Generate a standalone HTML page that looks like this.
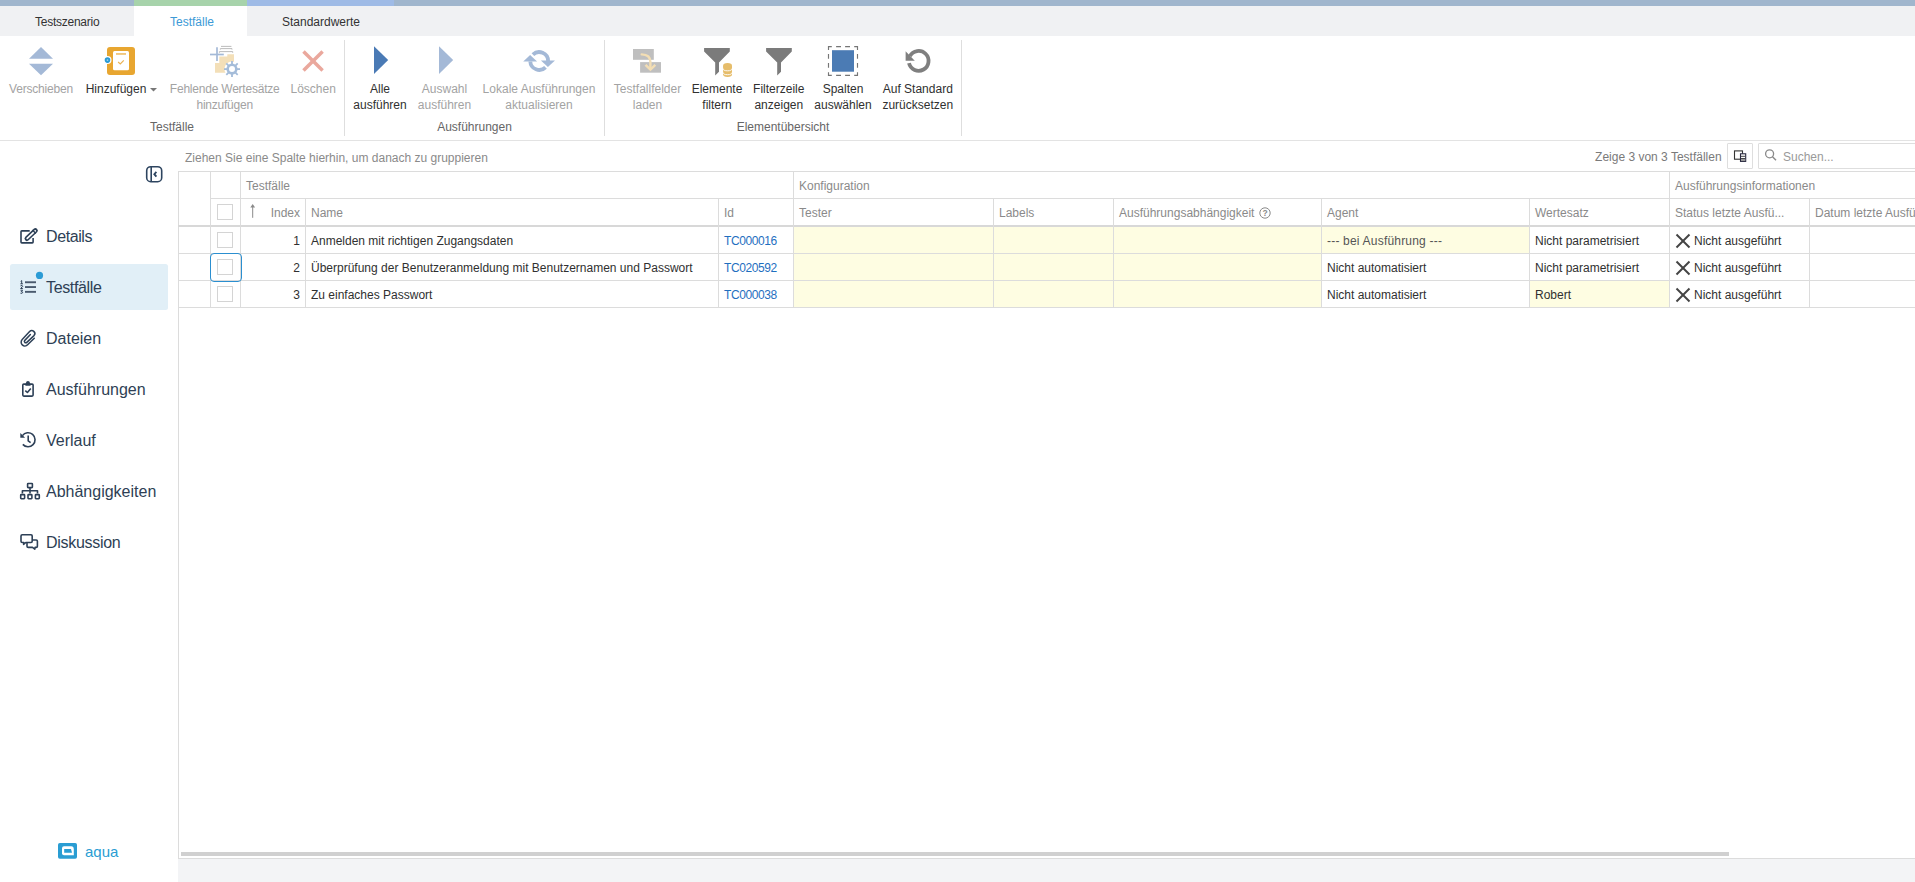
<!DOCTYPE html>
<html><head><meta charset="utf-8">
<style>
*{margin:0;padding:0;box-sizing:border-box}
html,body{width:1915px;height:882px;overflow:hidden;background:#fff;font-family:"Liberation Sans",sans-serif;font-size:12px;color:#303030}
.a{position:absolute}
.t{position:absolute;line-height:16px;white-space:nowrap}
.c{text-align:center}
.dis{color:#a3a3a3}
.vl{position:absolute;width:1px;background:#dcdcdc}
.hl{position:absolute;height:1px;background:#dcdcdc}
.hdr{color:#8a8a8a}
.side{position:absolute;left:46px;font-size:16px;line-height:20px;color:#2e3f55;white-space:nowrap}
.yl{position:absolute;background:#fefde2}
</style></head><body>
<!-- top stripe -->
<div class="a" style="left:0;top:0;width:1915px;height:6px;background:#a0b6cd"></div>
<div class="a" style="left:134px;top:0;width:113px;height:6px;background:#a7d3ab"></div>
<div class="a" style="left:247px;top:0;width:147px;height:6px;background:#9fbbe6"></div>
<!-- tab row -->
<div class="a" style="left:0;top:6px;width:1915px;height:30px;background:#f0f1f3"></div>
<div class="a" style="left:134px;top:6px;width:113px;height:30px;background:#fff"></div>
<div class="t" style="left:35px;top:14px;color:#333;letter-spacing:-0.25px">Testszenario</div>
<div class="t" style="left:170px;top:14px;color:#3d9ad6">Testfälle</div>
<div class="t" style="left:282px;top:14px;color:#333">Standardwerte</div>

<!-- ribbon -->

<svg class="a" style="left:0;top:0" width="1000" height="140" viewBox="0 0 1000 140">
 <!-- Verschieben -->
 <polygon points="29,58.7 41,47 53,58.7" fill="#a4b9d7"/>
 <polygon points="29,63.8 53,63.8 41,75.2" fill="#a4b9d7"/>
 <!-- Hinzufuegen -->
 <rect x="107" y="47" width="28" height="28" rx="3" fill="#e8a630"/>
 <rect x="113" y="51" width="16" height="19.2" rx="1.5" fill="#fff"/>
 <rect x="116" y="53.1" width="10" height="1.7" fill="#efc170"/>
 <polyline points="118.1,62 120.3,63.9 123.8,60.3" fill="none" stroke="#eab355" stroke-width="1.2"/>
 <circle cx="107.5" cy="60.1" r="4" fill="#fff"/>
 <circle cx="107.5" cy="60.1" r="2.8" fill="#2a9ad4"/>
 <circle cx="107.5" cy="60.1" r="0.9" fill="#9fd3ee"/>
 <polygon points="150,88 157,88 153.5,91.5" fill="#777"/>
 <!-- Fehlende Wertesaetze -->
 <g stroke="#b4b4b4" stroke-width="0.9" fill="none">
  <line x1="221" y1="46.4" x2="231.4" y2="46.4"/>
  <polyline points="220.3,49.6 220.3,48.6 232,48.6 232,49.6"/>
  <polyline points="219.4,52.8 219.4,51.6 232.7,51.6 232.7,52.8"/>
 </g>
 <polygon points="215,63 219.3,63 219.3,56.5 227.3,56.5 227.3,54.2 234,54.2 234,62 226,72.8 215,72.8" fill="#f3dfb8"/>
 <line x1="217" y1="47.3" x2="217" y2="61.1" stroke="#a4b9d7" stroke-width="1.7"/>
 <line x1="210" y1="54.5" x2="223.8" y2="54.5" stroke="#a4b9d7" stroke-width="1.7"/>
 <circle cx="232" cy="69.1" r="7.6" fill="#fff"/>
 <g stroke="#a4bcd9" stroke-width="1.8">
  <line x1="232" y1="61.1" x2="232" y2="77.1"/>
  <line x1="224" y1="69.1" x2="240" y2="69.1"/>
  <line x1="226.3" y1="63.4" x2="237.7" y2="74.8"/>
  <line x1="237.7" y1="63.4" x2="226.3" y2="74.8"/>
 </g>
 <circle cx="232" cy="69.1" r="4.3" fill="#fff" stroke="#a4bcd9" stroke-width="2.6"/>
 <!-- Loeschen -->
 <g stroke="#eaa89d" stroke-width="3.5">
  <line x1="303.5" y1="51.4" x2="322.6" y2="70.5"/>
  <line x1="322.6" y1="51.4" x2="303.5" y2="70.5"/>
 </g>
 <!-- separators -->
 <rect x="344" y="40" width="1" height="96" fill="#dedede"/>
 <rect x="604" y="40" width="1" height="96" fill="#dedede"/>
 <rect x="961" y="40" width="1" height="96" fill="#dedede"/>
 <!-- Alle ausfuehren -->
 <polygon points="374,46.2 388.2,60.1 374,74" fill="#4a7ab5"/>
 <polygon points="439,46.2 453.2,60.1 439,74" fill="#a4b9d7"/>
 <!-- refresh -->
 <g fill="none" stroke="#a4b9d7" stroke-width="3.8">
  <path d="M532.9,54.7 A8.9,8.9 0 0 1 548.1,61"/>
  <path d="M545.5,67.3 A8.9,8.9 0 0 1 530.3,61.5"/>
 </g>
 <polygon points="540.9,60.4 555,60.4 547.9,67.1" fill="#a4b9d7"/>
 <polygon points="523.2,61.5 537.1,61.5 530.1,55" fill="#a4b9d7"/>
 <!-- Testfallfelder laden -->
 <rect x="633" y="49" width="20.8" height="10.8" fill="#bfbfbf"/>
 <rect x="640.1" y="62.1" width="20.9" height="10.6" fill="#bfbfbf"/>
 <path d="M641.7,54.4 Q650.4,54.6 650.4,62 L650.4,68" fill="none" stroke="#f3deb4" stroke-width="2.4" stroke-linecap="round"/>
 <polygon points="644.6,65.8 646.4,64.1 650.4,67.9 654.4,64.1 656.2,65.8 650.4,71.2" fill="#f3deb4"/>
 <!-- Elemente filtern -->
 <polygon points="704.1,48.1 729.8,48.1 729.8,51.6 719,62.4 719,71.8 715.2,75.4 715.2,62.4 704.1,51.6" fill="#7b7b7b"/>
 <g fill="#e6bd6b">
  <rect x="723.1" y="65.7" width="8.9" height="8.8"/>
  <ellipse cx="727.55" cy="65.7" rx="4.45" ry="2.7"/>
  <ellipse cx="727.55" cy="74.5" rx="4.45" ry="2.4"/>
 </g>
 <g fill="none" stroke="#fff" stroke-width="0.9">
  <path d="M723.1,68.6 A4.45,2.2 0 0 0 732,68.6"/>
  <path d="M723.1,72.5 A4.45,2.2 0 0 0 732,72.5"/>
 </g>
 <!-- Filterzeile -->
 <polygon points="766.1,48.1 791.8,48.1 791.8,51.6 781,62.4 781,71.8 777.2,75.4 777.2,62.4 766.1,51.6" fill="#7b7b7b"/>
 <!-- Spalten -->
 <path fill="none" stroke="#767676" stroke-width="1.15" d="M828.5,49.9 V46.6 H831.8 M854.2,46.6 H857.5 V49.9 M857.5,72.2 V75.3 H854.2 M831.8,75.3 H828.5 V72.2 M836.1,46.6 H841 M845.1,46.6 H850 M836.1,75.3 H841 M845.1,75.3 H850 M828.5,54 V58.8 M828.5,63 V67.8 M857.5,54 V58.8 M857.5,63 V67.8"/>
 <rect x="832" y="50.2" width="22" height="21.5" fill="#4b7bb4"/>
 <!-- reset -->
 <path d="M909,63.1 A9.9,9.9 0 1 0 909.9,56.2" fill="none" stroke="#7f7f7f" stroke-width="3.8"/>
 <polygon points="905.6,51.3 905.6,60.8 914.8,60.8" fill="#7f7f7f"/>
</svg>
<div class="t c dis" style="left:-59px;width:200px;top:81px;letter-spacing:-0.2px">Verschieben</div>
<div class="t c" style="left:16px;width:200px;top:81px">Hinzufügen</div>
<div class="t c dis" style="left:124.7px;width:200px;top:81px;letter-spacing:-0.22px">Fehlende Wertesätze<br>hinzufügen</div>
<div class="t c dis" style="left:213.2px;width:200px;top:81px">Löschen</div>
<div class="t c" style="left:280px;width:200px;top:81px">Alle<br>ausführen</div>
<div class="t c dis" style="left:344.5px;width:200px;top:81px">Auswahl<br>ausführen</div>
<div class="t c dis" style="left:439px;width:200px;top:81px">Lokale Ausführungen<br>aktualisieren</div>
<div class="t c dis" style="left:547.5px;width:200px;top:81px">Testfallfelder<br>laden</div>
<div class="t c" style="left:617px;width:200px;top:81px">Elemente<br>filtern</div>
<div class="t c" style="left:678.8px;width:200px;top:81px">Filterzeile<br>anzeigen</div>
<div class="t c" style="left:743px;width:200px;top:81px">Spalten<br>auswählen</div>
<div class="t c" style="left:817.8px;width:200px;top:81px">Auf Standard<br>zurücksetzen</div>
<div class="t c" style="left:72px;width:200px;top:119px;color:#666">Testfälle</div>
<div class="t c" style="left:374.5px;width:200px;top:119px;color:#666">Ausführungen</div>
<div class="t c" style="left:683px;width:200px;top:119px;color:#666">Elementübersicht</div>


<!-- ribbon bottom border -->
<div class="hl" style="left:0;top:140px;width:1915px;background:#e3e3e3"></div>

<!-- sidebar -->

<div class="a" style="left:10px;top:264px;width:158px;height:46px;background:#e1eff7;border-radius:2.5px"></div>
<svg class="a" style="left:0;top:140px" width="178" height="742" viewBox="0 140 178 742">
 <!-- collapse -->
 <rect x="146.7" y="166.7" width="15" height="15" rx="4" fill="none" stroke="#2e4560" stroke-width="1.6"/>
 <line x1="151.2" y1="166.7" x2="151.2" y2="181.7" stroke="#2e4560" stroke-width="1.6"/>
 <polyline points="156.4,171.8 154.3,174.2 156.4,176.6" fill="none" stroke="#2e4560" stroke-width="1.8"/>
 <g fill="none" stroke="#2d4057" stroke-width="1.6" stroke-linejoin="round">
  <!-- details edit icon -->
  <path d="M29.7,230.9 H21.8 Q21,230.9 21,231.7 V242.1 Q21,242.9 21.8,242.9 H32.3 Q33.1,242.9 33.1,242.1 V238"/>
  <line x1="27" y1="238.6" x2="35.4" y2="230.6" stroke-width="4.9" stroke-linecap="round"/><line x1="27.2" y1="238.4" x2="35.2" y2="230.8" stroke="#fff" stroke-width="1.7" stroke-linecap="round"/>
  <line x1="32.5" y1="230.1" x2="35.8" y2="233.5" stroke-width="1.4"/>
  <!-- paperclip -->
  <path stroke-width="1.5" stroke-linecap="round" d="M34.3,338.3 L27.6,344.8 A3.6,3.6 0 0 1 22.2,339.6 L29.6,331.6 A2.8,2.8 0 0 1 34.0,335.6 L26.8,342.4 A1.4,1.4 0 0 1 24.8,340.4 L30.4,334.6"/>
  <!-- clipboard -->
  <path d="M26,384.1 H23.8 Q22.8,384.1 22.8,385.1 V395.1 Q22.8,396.1 23.8,396.1 H32.1 Q33.1,396.1 33.1,395.1 V385.1 Q33.1,384.1 32.1,384.1 H30"/>
  <polyline points="25.3,390.6 27.4,392.5 30.8,388.4"/>
  <!-- history -->
  <path d="M22.4,435.6 A7,7 0 1 1 22.8,444.4"/>
  <polyline points="28.2,435.6 28.2,440.9 30.6,442.6"/>
  <!-- hierarchy -->
  <rect x="27.6" y="483.5" width="4.8" height="4.1" rx="0.6"/>
  <polyline points="22.4,493.6 22.4,490.7 37.5,490.7 37.5,493.6"/>
  <line x1="30" y1="487.6" x2="30" y2="493.6"/>
  <rect x="20.7" y="494.6" width="3.9" height="4.1" rx="0.6"/>
  <rect x="28" y="494.6" width="3.9" height="4.1" rx="0.6"/>
  <rect x="35.4" y="494.6" width="3.9" height="4.1" rx="0.6"/>
  <!-- chat -->
  <path d="M22.2,542.5 Q21,542.5 21,541.3 V535.9 Q21,534.7 22.2,534.7 H31 Q32.2,534.7 32.2,535.9 V541.3 Q32.2,542.5 31,542.5 H25.8 L23.6,544.3 L23.8,542.5 Z"/>
  <path d="M32.2,540 H36.2 Q37.4,540 37.4,541.2 V546.2 Q37.4,547.4 36.2,547.4 H35.1 L34.8,549.2 L32.5,547.4 H28.2 Q27,547.4 27,546.2 V542.5"/>
 </g>
 <!-- clipboard clip -->
 <path d="M25.3,385.7 H30.6 L30.1,383.2 Q29.7,381.1 27.95,381.1 Q26.2,381.1 25.8,383.2 Z" fill="#2d4057"/>
 <!-- history arrow -->
 <polygon points="20.3,432.9 20.3,437.7 25.1,437.7" fill="#2d4057"/>
 <!-- testfaelle list icon -->
 <g fill="#4a5a6e">
  <rect x="25" y="281.3" width="11" height="1.9"/>
  <rect x="25" y="286.1" width="11" height="1.9"/>
  <rect x="25" y="290.9" width="11" height="1.9"/>
 </g>
 <g fill="none" stroke="#2d4057" stroke-width="1">
  <polyline points="20.7,281.3 21.7,280.6 21.7,283.8"/>
  <line x1="20.4" y1="283.8" x2="22.9" y2="283.8"/>
  <path d="M20.5,285.9 Q22.7,284.8 22.7,286.4 L20.6,288.5 H22.8"/>
  <path d="M20.5,290.2 H22.6 L21.3,291.5 Q22.8,291.6 22.7,292.6 Q22.4,293.6 20.5,293.2"/>
 </g>
 <circle cx="39.5" cy="275.4" r="3.6" fill="#2b9bd5"/>
 <!-- aqua logo -->
 <rect x="58" y="843" width="19" height="15.7" rx="1.8" fill="#2a9dd3"/>
 <path d="M64,846.2 H71.3 Q73.8,846.2 73.8,849.5 V855.2 H64 Q62,855.2 62,853.2 V848.2 Q62,846.2 64,846.2 Z" fill="#fff"/>
 <path d="M64.2,849 H71 L72,852.7 H64.2 Z" fill="#2a9dd3"/>
</svg>
<div class="side" style="top:227px;letter-spacing:-0.4px">Details</div>
<div class="side" style="top:278px;letter-spacing:-0.35px">Testfälle</div>
<div class="side" style="top:329px">Dateien</div>
<div class="side" style="top:380px">Ausführungen</div>
<div class="side" style="top:431px">Verlauf</div>
<div class="side" style="top:482px">Abhängigkeiten</div>
<div class="side" style="top:533px;letter-spacing:-0.3px">Diskussion</div>
<div class="a" style="left:85px;top:842px;font-size:15px;line-height:20px;color:#2a9dd3">aqua</div>


<!-- grid -->
<div class="yl" style="left:794px;top:227px;width:527px;height:80px"></div>
<div class="yl" style="left:1322px;top:227px;width:207px;height:26px"></div>
<div class="yl" style="left:1530px;top:281px;width:139px;height:26px"></div>
<div class="hl" style="left:178px;top:171px;width:1737px"></div>
<div class="vl" style="left:178px;top:171px;height:688px"></div>
<div class="hl" style="left:178px;top:858px;width:1737px"></div>
<div class="hl" style="left:210px;top:198px;width:1705px"></div>
<div class="hl" style="left:178px;top:225px;width:1737px;height:2px;background:#d8d8d8"></div>
<div class="hl" style="left:178px;top:253px;width:1737px"></div>
<div class="hl" style="left:178px;top:280px;width:1737px"></div>
<div class="hl" style="left:178px;top:307px;width:1737px"></div>
<div class="vl" style="left:210px;top:171px;height:136px"></div>
<div class="vl" style="left:240px;top:171px;height:136px"></div>
<div class="vl" style="left:305px;top:198px;height:109px"></div>
<div class="vl" style="left:718px;top:198px;height:109px"></div>
<div class="vl" style="left:793px;top:171px;height:136px"></div>
<div class="vl" style="left:993px;top:198px;height:109px"></div>
<div class="vl" style="left:1113px;top:198px;height:109px"></div>
<div class="vl" style="left:1321px;top:198px;height:109px"></div>
<div class="vl" style="left:1529px;top:198px;height:109px"></div>
<div class="vl" style="left:1669px;top:171px;height:136px"></div>
<div class="vl" style="left:1809px;top:198px;height:109px"></div>
<div class="a" style="left:178px;top:859px;width:1737px;height:23px;background:#f3f4f6"></div>
<div class="a" style="left:181px;top:852px;width:1548px;height:4px;background:#d0d0d0"></div>
<div class="t hdr" style="left:185px;top:150px">Ziehen Sie eine Spalte hierhin, um danach zu gruppieren</div>
<div class="t" style="left:1521.6px;width:200px;text-align:right;top:149px;color:#7a7a7a">Zeige 3 von 3 Testfällen</div>
<div class="a" style="left:1727px;top:143px;width:26px;height:26px;border:1px solid #dedede;border-radius:1px"></div>
<div class="a" style="left:1758px;top:143px;width:200px;height:26px;border:1px solid #dedede;border-radius:1px"></div>
<svg class="a" style="left:1720px;top:140px" width="195" height="32" viewBox="1720 140 195 32">
 <rect x="1734.5" y="150.9" width="8" height="8.3" fill="none" stroke="#333" stroke-width="1.1"/>
 <rect x="1740.5" y="153.8" width="5.2" height="7.6" fill="#fff" stroke="#2a2a40" stroke-width="1.1"/>
 <line x1="1741" y1="156.3" x2="1745.2" y2="156.3" stroke="#333" stroke-width="0.9"/>
 <line x1="1741" y1="158.5" x2="1745.2" y2="158.5" stroke="#333" stroke-width="0.9"/>
 <rect x="1741" y="159" width="4.2" height="2" fill="#999"/>
 <circle cx="1769.6" cy="153.8" r="4" fill="none" stroke="#8a8a8a" stroke-width="1.3"/>
 <line x1="1772.5" y1="156.8" x2="1776" y2="160.2" stroke="#8a8a8a" stroke-width="1.4"/>
</svg>
<div class="t" style="left:1783px;top:149px;color:#9a9a9a">Suchen...</div>
<div class="t hdr" style="left:246px;top:178px">Testfälle</div>
<div class="t hdr" style="left:799px;top:178px">Konfiguration</div>
<div class="t hdr" style="left:1675px;top:178px">Ausführungsinformationen</div>
<div class="t hdr" style="left:311px;top:205px">Name</div>
<div class="t hdr" style="left:724px;top:205px">Id</div>
<div class="t hdr" style="left:799px;top:205px">Tester</div>
<div class="t hdr" style="left:999px;top:205px">Labels</div>
<div class="t hdr" style="left:1119px;top:205px">Ausführungsabhängigkeit</div>
<div class="t hdr" style="left:1327px;top:205px">Agent</div>
<div class="t hdr" style="left:1535px;top:205px">Wertesatz</div>
<div class="t hdr" style="left:1675px;top:205px">Status letzte Ausfü...</div>
<div class="t hdr" style="left:1815px;top:205px">Datum letzte Ausführung</div>
<div class="t hdr" style="left:200px;width:100px;text-align:right;top:205px">Index</div>
<svg class="a" style="left:240px;top:198px" width="60" height="28" viewBox="240 198 60 28">
 <line x1="252.7" y1="206" x2="252.7" y2="217.8" stroke="#8a8a8a" stroke-width="1"/>
 <polygon points="250.3,207.4 252.7,203.9 255.1,207.4" fill="#8a8a8a"/>
</svg>
<svg class="a" style="left:1255px;top:205px" width="20" height="18" viewBox="1255 205 20 18">
 <circle cx="1265" cy="213" r="5.2" fill="none" stroke="#8a8a8a" stroke-width="1"/>
 <text x="1265" y="216.3" font-family="Liberation Sans" font-size="8.5" font-weight="bold" fill="#8a8a8a" text-anchor="middle">?</text>
</svg>
<div class="a" style="left:217px;top:204px;width:16px;height:16px;border:1px solid #d4d4d4"></div>
<div class="a" style="left:217px;top:232px;width:16px;height:16px;border:1px solid #d4d4d4"></div>
<div class="a" style="left:217px;top:259px;width:16px;height:16px;border:1px solid #d4d4d4"></div>
<div class="a" style="left:217px;top:286px;width:16px;height:16px;border:1px solid #d4d4d4"></div>
<div class="a" style="left:210px;top:253px;width:32px;height:29px;border:1.5px solid #2b8fd0;border-radius:4px"></div>
<div class="t" style="left:200px;width:100px;text-align:right;top:233px">1</div>
<div class="t" style="left:311px;top:233px">Anmelden mit richtigen Zugangsdaten</div>
<div class="t" style="left:724px;top:233px;color:#1f6fbf;letter-spacing:-0.4px">TC000016</div>
<div class="t" style="left:1327px;top:233px;color:#555;letter-spacing:0.2px">--- bei Ausführung ---</div>
<div class="t" style="left:1535px;top:233px">Nicht parametrisiert</div>
<div class="t" style="left:1694px;top:233px">Nicht ausgeführt</div>
<svg class="a" style="left:1674px;top:233px" width="20" height="16" viewBox="0 0 20 16"><g stroke="#444" stroke-width="2"><line x1="2.5" y1="1.5" x2="15.5" y2="14.5"/><line x1="15.5" y1="1.5" x2="2.5" y2="14.5"/></g></svg>
<div class="t" style="left:200px;width:100px;text-align:right;top:260px">2</div>
<div class="t" style="left:311px;top:260px">Überprüfung der Benutzeranmeldung mit Benutzernamen und Passwort</div>
<div class="t" style="left:724px;top:260px;color:#1f6fbf;letter-spacing:-0.4px">TC020592</div>
<div class="t" style="left:1327px;top:260px">Nicht automatisiert</div>
<div class="t" style="left:1535px;top:260px">Nicht parametrisiert</div>
<div class="t" style="left:1694px;top:260px">Nicht ausgeführt</div>
<svg class="a" style="left:1674px;top:260px" width="20" height="16" viewBox="0 0 20 16"><g stroke="#444" stroke-width="2"><line x1="2.5" y1="1.5" x2="15.5" y2="14.5"/><line x1="15.5" y1="1.5" x2="2.5" y2="14.5"/></g></svg>
<div class="t" style="left:200px;width:100px;text-align:right;top:287px">3</div>
<div class="t" style="left:311px;top:287px">Zu einfaches Passwort</div>
<div class="t" style="left:724px;top:287px;color:#1f6fbf;letter-spacing:-0.4px">TC000038</div>
<div class="t" style="left:1327px;top:287px">Nicht automatisiert</div>
<div class="t" style="left:1535px;top:287px">Robert</div>
<div class="t" style="left:1694px;top:287px">Nicht ausgeführt</div>
<svg class="a" style="left:1674px;top:287px" width="20" height="16" viewBox="0 0 20 16"><g stroke="#444" stroke-width="2"><line x1="2.5" y1="1.5" x2="15.5" y2="14.5"/><line x1="15.5" y1="1.5" x2="2.5" y2="14.5"/></g></svg>

</body></html>
